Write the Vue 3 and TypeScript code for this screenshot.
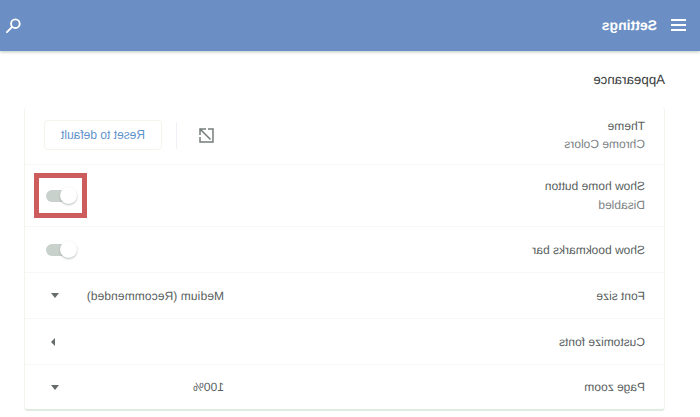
<script setup lang="ts">
interface Row { label: string; sub?: string; kind: string; value?: string; cls: string }
const rows: Row[] = [
  { label: 'Theme', sub: 'Chrome Colors', kind: 'theme', cls: 'r58' },
  { label: 'Show home button', sub: 'Disabled', kind: 'toggle-hl', cls: 'r62' },
  { label: 'Show bookmarks bar', kind: 'toggle', cls: 'r46' },
  { label: 'Font size', kind: 'select', value: 'Medium (Recommended)', cls: 'r46' },
  { label: 'Customize fonts', kind: 'arrow', cls: 'r46' },
  { label: 'Page zoom', kind: 'select', value: '100%', cls: 'r45' },
]
</script>

<template>
  <div class="page">
    <header class="bar">
      <svg class="menu" width="15" height="12" viewBox="0 0 15 12"><path d="M0 1h15M0 6h15M0 11h15" stroke="#fff" stroke-width="1.8"/></svg>
      <span class="title">Settings</span>
      <svg class="search" width="15" height="15" viewBox="0 0 16 16" fill="none" stroke="#fff" stroke-width="2"><circle cx="6" cy="6" r="4.6"/><path d="M9.5 9.5 15 15" stroke-linecap="round"/></svg>
    </header>
    <h2 class="heading">Appearance</h2>
    <section class="card">
      <div v-for="r in rows" :key="r.label" class="row" :class="r.cls">
        <div class="text">
          <div class="label">{{ r.label }}</div>
          <div v-if="r.sub" class="sub">{{ r.sub }}</div>
        </div>
        <template v-if="r.kind === 'theme'">
          <svg class="open" width="15" height="15" viewBox="0 0 15 15" fill="none" stroke="#757d7a" stroke-width="1.5"><path d="M6 1H1v13h13V9M3.5 11.5 13.5 1.5M8 1h6v6"/></svg>
          <span class="sep"></span>
          <button class="reset">Reset to default</button>
        </template>
        <div v-else-if="r.kind.startsWith('toggle')" class="toggle" :class="{ hl: r.kind === 'toggle-hl' }">
          <span class="track"></span><span class="knob"></span>
          <span v-if="r.kind === 'toggle-hl'" class="mark"></span>
        </div>
        <div v-else-if="r.kind === 'select'" class="select">
          <span>{{ r.value }}</span><i class="down"></i>
        </div>
        <i v-else class="right"></i>
      </div>
    </section>
  </div>
</template>

<style>
html, body { margin: 0; background: #fff; overflow: hidden; }
</style>

<style scoped>
.page { width: 700px; height: 417px; overflow: hidden; transform: scaleX(-1); background: #fff; font-family: "Liberation Sans", Arial, sans-serif; font-size: 12px; color: #5f6368; text-rendering: geometricPrecision; }
.bar { height: 51px; background: #6b8fc4; display: flex; align-items: center; padding: 0 6px 0 14px; box-shadow: 0 1px 3px rgba(120,150,120,.5); position: relative; }
.menu { margin-right: 14px; margin-bottom: 1px; }
.title { color: #fff; font-size: 14px; font-weight: 700; margin-bottom: 1px; }
.search { margin-left: auto; margin-bottom: 1px; }
.heading { margin: 0; padding: 21px 0 21px 35px; height: 14px; font-size: 13.3px; font-weight: 400; color: #3c3f41; line-height: 16px; }
.card { margin-left: 35px; width: 641px; box-sizing: border-box; border-radius: 4px; border: 1px solid #f1f5ee; border-bottom: 2px solid #dfeae2; border-top: 0; }
.row { display: flex; align-items: center; padding: 0 19px; border-bottom: 1px solid #f7f7f4; box-sizing: border-box; }
.row:last-child { border-bottom: 0; }
.r58 { height: 58px; padding-bottom: 1px; }
.r62 { height: 62px; }
.r46 { height: 46px; }
.r45 { height: 44px; }
.text { flex: 1; }
.label { line-height: 18px; color: #5a5f61; }
.sub { line-height: 18px; color: #7d8384; }
.r62 .text { margin-top: -1px; }
.r62 .sub { margin-top: 1px; }
.open { margin-right: 22px; }
.sep { width: 1px; height: 27px; background: #eef1f6; margin-right: 14px; }
.reset { width: 118px; height: 30px; border: 1px solid #f3f4ec; border-radius: 4px; background: #fff; color: #5f93cc; font: inherit; padding: 0; }
.toggle { position: relative; width: 31px; height: 18px; margin-right: 2px; }
.track { position: absolute; left: 5px; top: 3px; height: 12px; width: 26px; border-radius: 6px; background: #c9d1cc; }
.knob { position: absolute; left: 0; top: 0; width: 17px; height: 17px; border-radius: 50%; background: #fff; box-shadow: 0 1px 2px rgba(90,110,100,.45); }
.mark { position: absolute; left: -10px; top: -14px; width: 53px; height: 45px; box-sizing: border-box; border: 5px solid #cd5c5c; }
.select { width: 180px; display: flex; align-items: center; justify-content: space-between; padding-right: 7px; box-sizing: border-box; color: #5a5f61; letter-spacing: .1px; }
.down { width: 0; height: 0; border: 4.5px solid transparent; border-top: 5px solid #666b6b; border-bottom: 0; }
.right { width: 0; height: 0; border: 4px solid transparent; border-left: 4px solid #666b6b; border-right: 0; margin-right: 7px; }
</style>
